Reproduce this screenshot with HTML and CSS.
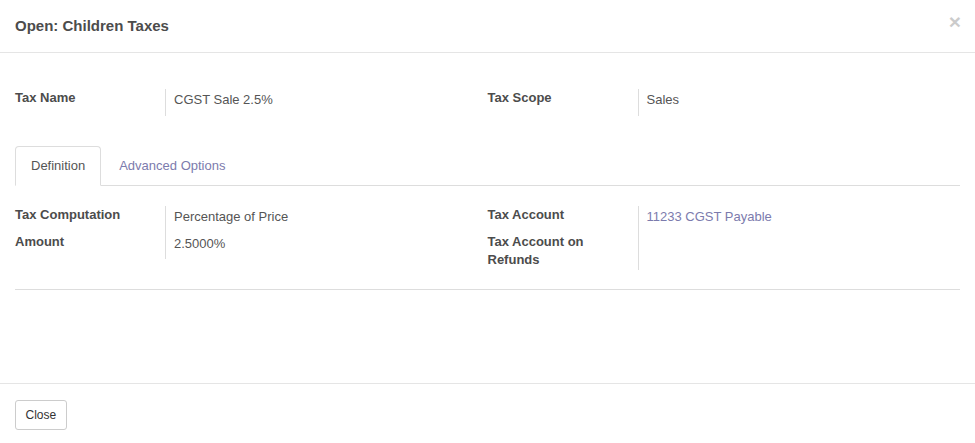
FILE: index.html
```html
<!DOCTYPE html>
<html lang="en">
<head>
  <meta charset="UTF-8" />
  <title>Open: Children Taxes</title>
  <link rel="stylesheet" href="styles.css">
</head>
<body>
  <div class="modal">
    <div class="modal-header">
      <h4 class="modal-title">Open: Children Taxes</h4>
      <button class="close" type="button">&times;</button>
    </div>
    <div class="modal-body">
      <div class="group-row">
        <div class="group">
          <div class="label">Tax Name</div>
          <div class="value">CGST Sale 2.5%</div>
        </div>
        <div class="group">
          <div class="label">Tax Scope</div>
          <div class="value">Sales</div>
        </div>
      </div>

      <div class="notebook">
        <ul class="nav-tabs">
          <li class="active"><a>Definition</a></li>
          <li><a>Advanced Options</a></li>
        </ul>
        <div class="tab-content">
          <div class="group-row">
            <div class="group">
              <div class="label">Tax Computation</div>
              <div class="value">Percentage of Price</div>
              <div class="label">Amount</div>
              <div class="value">2.5000%</div>
            </div>
            <div class="group">
              <div class="label">Tax Account</div>
              <div class="value"><a class="link">11233 CGST Payable</a></div>
              <div class="label narrow">Tax Account on Refunds</div>
              <div class="value empty"></div>
            </div>
          </div>
        </div>
      </div>
    </div>
    <div class="modal-footer">
      <button class="btn" type="button">Close</button>
    </div>
  </div>
</body>
</html>
```

FILE: styles.css
```css
body {
  margin: 0;
  font-family: 'Liberation Sans', Arial, sans-serif;
  font-size: 13px;
  line-height: 1.42857;
  color: #4c4c4c;
  background: #fff;
}
.modal {
  width: 975px;
}
.modal-header {
  display: flex;
  justify-content: space-between;
  align-items: flex-start;
  padding: 15px;
  height: 22px;
  border-bottom: 1px solid #e5e5e5;
}
.modal-title {
  margin: 0;
  font-size: 15px;
  font-weight: bold;
  line-height: 22px;
  color: #4c4c4c;
}
.close {
  border: none;
  background: none;
  padding: 0;
  margin-top: -4px;
  margin-right: -1px;
  font-family: 'Liberation Sans', Arial, sans-serif;
  font-size: 21px;
  font-weight: bold;
  line-height: 1;
  color: #000;
  opacity: 0.2;
  cursor: pointer;
}
.modal-body {
  padding: 36px 15px 0;
  height: 294px;
}
.group-row {
  display: flex;
}
.group {
  flex: 1;
  display: grid;
  grid-template-columns: 150px 1fr;
  align-content: start;
}
.label {
  font-weight: bold;
  color: #4c4c4c;
  padding-right: 10px;
}
.label.narrow {
  padding-right: 40px;
}
.value {
  border-left: 1px solid #ddd;
  padding: 2px 0 6px 8px;
  color: #555;
}
.link {
  color: #7c7bad;
  text-decoration: none;
}
.notebook {
  margin-top: 30px;
  border-bottom: 1px solid #ddd;
  padding-bottom: 19px;
}
.nav-tabs {
  list-style: none;
  margin: 0;
  padding: 0;
  display: flex;
  border-bottom: 1px solid #ddd;
}
.nav-tabs li {
  margin-right: 2px;
  margin-bottom: -1px;
}
.nav-tabs a {
  display: block;
  padding: 10px 15px;
  border: 1px solid transparent;
  border-radius: 4px 4px 0 0;
  color: #7c7bad;
  cursor: pointer;
}
.nav-tabs li.active a {
  color: #555;
  background: #fff;
  border-color: #ddd #ddd transparent;
}
.tab-content {
  padding-top: 20px;
}
.modal-footer {
  border-top: 1px solid #e5e5e5;
  padding: 16px 15px 14px;
}
.btn {
  font-family: 'Liberation Sans', Arial, sans-serif;
  font-size: 12px;
  line-height: 1.5;
  padding: 5px 9.5px;
  color: #333;
  background: #fff;
  border: 1px solid #ccc;
  border-radius: 3px;
  cursor: pointer;
}
```
